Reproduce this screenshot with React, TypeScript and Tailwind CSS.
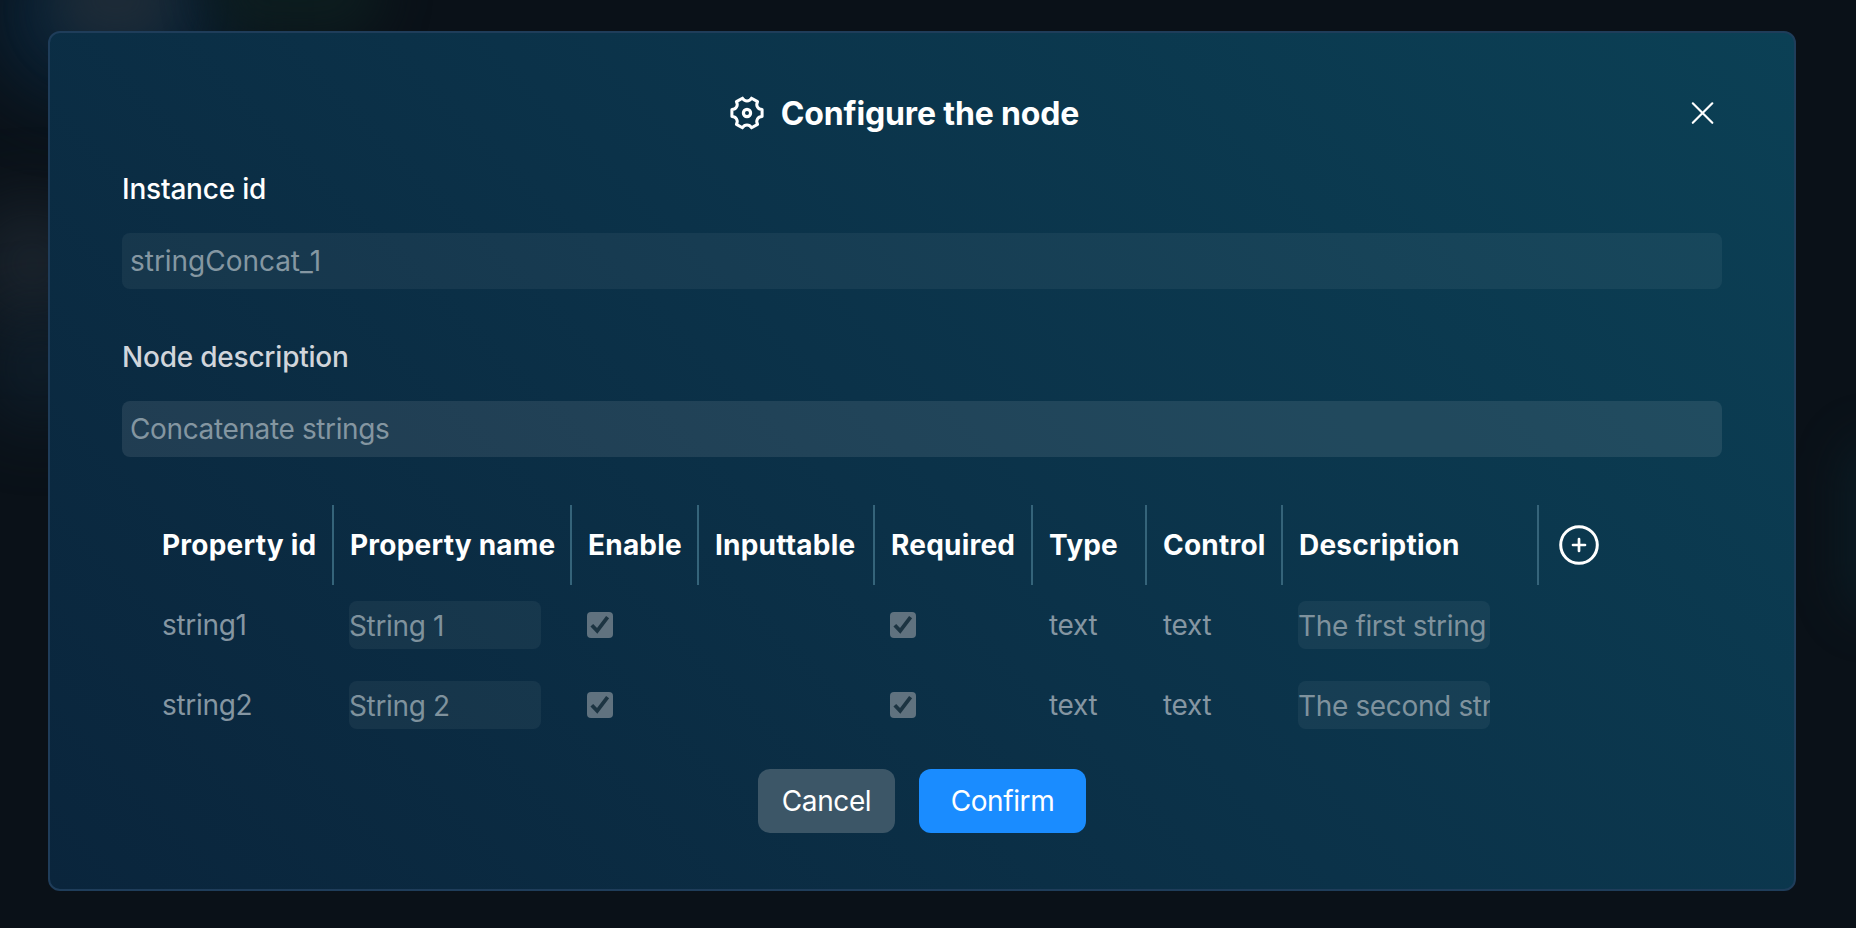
import type { ReactNode } from "react";

type Property = { id: string; name: string; type: string; control: string; description: string };

const properties: Property[] = [
  { id: "string1", name: "String 1", type: "text", control: "text", description: "The first string" },
  { id: "string2", name: "String 2", type: "text", control: "text", description: "The second string" },
];

const columns = "grid grid-cols-[188px_238px_127px_176px_158px_114px_136px_256px_80px]";

function GearIcon() {
  const point = (r: number, deg: number) => {
    const a = (deg * Math.PI) / 180;
    return `${(r * Math.cos(a)).toFixed(2)} ${(r * Math.sin(a)).toFixed(2)}`;
  };
  let d = `M${point(15.5, -13)}`;
  for (let k = 0; k < 6; k++) {
    const t = k * 60;
    d += `L${point(15.5, t + 13)}C${point(11.4, t + 18)} ${point(11.4, t + 42)} ${point(15.5, t + 47)}`;
  }
  return (
    <svg className="h-9 w-9 shrink-0" viewBox="-18 -18 36 36" fill="none" stroke="white" strokeWidth="3" strokeLinejoin="round">
      <path d={`${d}Z`} />
      <circle r="3.6" strokeWidth="3.2" />
    </svg>
  );
}

function CloseIcon() {
  return (
    <svg className="h-9 w-9" viewBox="0 0 36 36" fill="none" stroke="white" strokeWidth="2.2" strokeLinecap="round">
      <path d="M6.8 8.3 26.3 27.8M26.3 8.3 6.8 27.8" />
    </svg>
  );
}

function AddIcon() {
  return (
    <svg className="h-12 w-12" viewBox="0 0 48 48" fill="none" stroke="white" strokeWidth="3" strokeLinecap="round">
      <circle cx="24" cy="24" r="18.3" />
      <path d="M18 24h12M24 18v12" strokeWidth="2.7" />
    </svg>
  );
}

function CheckBox() {
  return (
    <span role="checkbox" aria-checked="true" className="-ml-px block h-[26px] w-[26px] rounded bg-[#60727f]">
      <svg viewBox="0 0 26 26" fill="none" stroke="#1c3442" strokeWidth="3.8">
        <path d="M4.8 13.2 10.2 18.8 20.6 5.2" />
      </svg>
    </span>
  );
}

function Head({ children, last }: { children: ReactNode; last?: boolean }) {
  return (
    <div
      className={
        last
          ? "flex h-20 items-center pl-4"
          : "flex h-20 items-center border-r-2 border-[#35647a] pl-4 text-[28px] font-bold tracking-[0.22px] whitespace-nowrap text-white"
      }
    >
      {children}
    </div>
  );
}

function Cell({ children }: { children?: ReactNode }) {
  return <div className="flex h-20 items-center pl-4 text-[28px] tracking-[-0.3px] text-[#8596a2]">{children}</div>;
}

function CellInput({ value }: { value: string }) {
  return (
    <input
      readOnly
      value={value}
      className="-ml-px h-12 w-48 rounded-lg bg-white/5 p-0 pt-0.5 text-[28px] tracking-[-0.35px] text-[#7f929d] outline-none"
    />
  );
}

export default function App() {
  return (
    <div className="relative h-[928px] w-[1856px] overflow-hidden bg-[#0a1118] font-['Inter','Liberation_Sans',sans-serif]">
      <div className="absolute -top-16 -left-2 h-40 w-60 rounded-full bg-[#0a2840] opacity-80 blur-2xl" />
      <div className="absolute -top-12 left-13 h-24 w-32 rounded-full bg-[#222d37] opacity-80 blur-xl" />
      <div className="absolute -top-14 left-52 h-24 w-44 rounded-full bg-[#0d1f20] opacity-80 blur-xl" />
      <div className="absolute top-52 -left-6 h-28 w-28 rounded-full bg-[#222c36] opacity-90 blur-2xl" />
      <div className="absolute top-80 -left-2 h-24 w-24 rounded-full bg-[#122738] opacity-80 blur-2xl" />
      <div className="absolute top-[440px] left-[1844px] h-44 w-16 rounded-full bg-[#0a2029] opacity-70 blur-xl" />

      <div className="relative mt-[31px] ml-12 flex h-[860px] w-[1748px] flex-col rounded-xl border-2 border-[#1f3d5a] bg-linear-45 from-[#0a253c] via-[#0b3249] to-[#0b4055] px-[72px] pt-14">
        <header className="flex h-12 items-center">
          <div className="flex flex-1 items-center justify-center gap-4">
            <GearIcon />
            <h1 className="pt-0.5 text-[32px] font-bold tracking-[-0.14px] text-white">Configure the node</h1>
          </div>
          <CloseIcon />
        </header>

        <label className="mt-8 h-10 text-[28px] leading-10 font-medium tracking-[-0.2px] text-white">Instance id</label>
        <input
          readOnly
          value="stringConcat_1"
          className="mt-6 h-14 rounded-lg bg-white/5 px-2 text-[28px] tracking-[-0.03px] text-[#8597a2] outline-none"
        />

        <label className="mt-12 h-10 text-[28px] leading-10 font-medium tracking-[-0.22px] text-[#d1d5db]">Node description</label>
        <input
          readOnly
          value="Concatenate strings"
          className="mt-6 h-14 rounded-lg bg-white/9 px-2 text-[28px] tracking-[-0.37px] text-[#8496a1] outline-none"
        />

        <section className="mt-12 ml-6">
          <div className={columns}>
            <Head>Property id</Head>
            <Head>Property name</Head>
            <Head>Enable</Head>
            <Head>Inputtable</Head>
            <Head>Required</Head>
            <Head>Type</Head>
            <Head>Control</Head>
            <Head>Description</Head>
            <Head last>
              <AddIcon />
            </Head>
          </div>
          {properties.map((p) => (
            <div key={p.id} className={columns}>
              <Cell>{p.id}</Cell>
              <Cell>
                <CellInput value={p.name} />
              </Cell>
              <Cell>
                <CheckBox />
              </Cell>
              <Cell />
              <Cell>
                <CheckBox />
              </Cell>
              <Cell>{p.type}</Cell>
              <Cell>{p.control}</Cell>
              <Cell>
                <CellInput value={p.description} />
              </Cell>
            </div>
          ))}
        </section>

        <footer className="mt-6 flex justify-center gap-6 text-[28px] tracking-[-0.4px] text-white">
          <button className="h-16 w-[137px] rounded-xl bg-[#3c5667]">Cancel</button>
          <button className="h-16 w-[167px] rounded-xl bg-[#1a8cff]">Confirm</button>
        </footer>
      </div>
    </div>
  );
}
